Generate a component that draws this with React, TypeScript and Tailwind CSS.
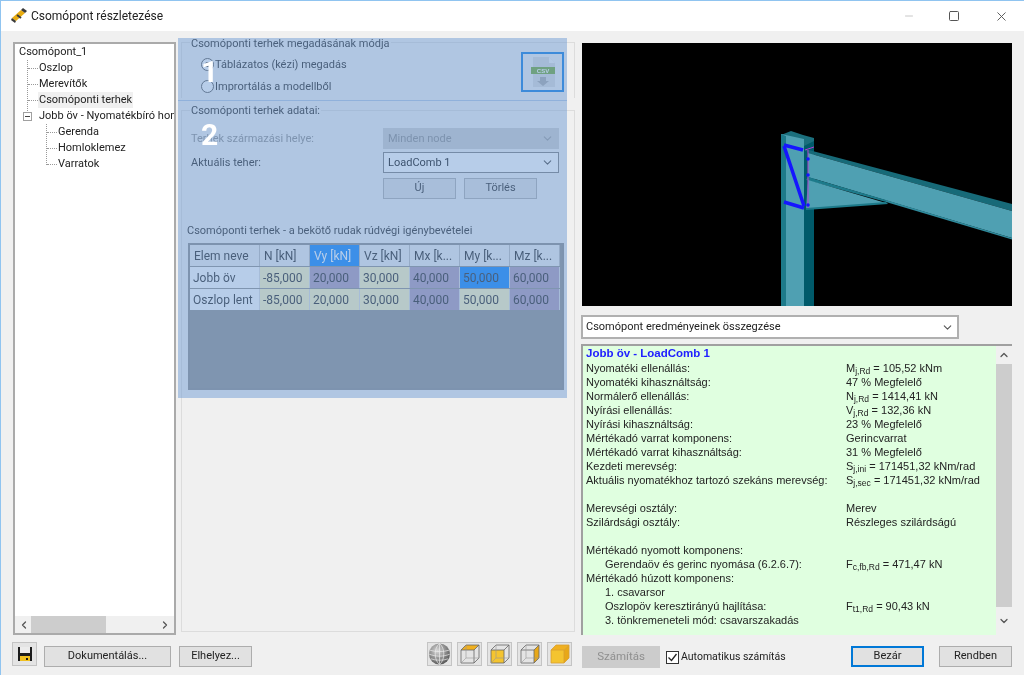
import { ChevronDown, ChevronLeft, ChevronRight, ChevronUp, Minus, Square, X } from "lucide-react";
import type { ReactNode } from "react";

const uiFont = "[font-family:'Roboto','Noto_Sans',sans-serif]";

function TitleIcon() {
  return (
    <svg width="18" height="18" viewBox="0 0 18 18">
      <path d="M2 11 L11 3 L15 6 L6 14 Z" fill="#e8ac10" />
      <path d="M2 11 L6 14 L5 16 L1 13 Z" fill="#3a3a3a" />
      <path d="M11 3 L13 1 L17 4 L15 6 Z" fill="#3a3a3a" />
      <path d="M7 8 L11 11" stroke="#3a3a3a" strokeWidth="2" />
    </svg>
  );
}

function TreeRow({ label, active }: { label: string; active?: boolean }) {
  return (
    <div className="flex h-4 items-center">
      <span className="w-[10px] shrink-0 border-t border-dotted border-[#999]" />
      <span className={`whitespace-nowrap px-[1px] ${active ? "bg-[#f0f0f0]" : ""}`}>{label}</span>
    </div>
  );
}

function Tree() {
  return (
    <div className="flex h-[593px] w-[163px] shrink-0 flex-col border-2 border-[#aaaaaa] bg-white text-[11px] leading-4 text-[#222]">
      <div className="flex-1 overflow-hidden pl-[4px]">
        <div className="h-4 whitespace-nowrap">Csomópont_1</div>
        <div className="-mb-[5px] ml-[8px] h-[53px] border-l border-dotted border-[#999]">
          <TreeRow label="Oszlop" />
          <TreeRow label="Merevítők" />
          <TreeRow label="Csomóponti terhek" active />
        </div>
        <div className="flex h-4 items-center whitespace-nowrap pl-[4px]">
          <span className="flex h-[9px] w-[9px] shrink-0 items-center justify-center border border-[#a0a0a0] bg-white">
            <span className="h-px w-[5px] bg-[#444]" />
          </span>
          <span className="ml-[7px]">Jobb öv - Nyomatékbíró hom</span>
        </div>
        <div className="ml-[27px] h-[41px] border-l border-dotted border-[#999]">
          <TreeRow label="Gerenda" />
          <TreeRow label="Homloklemez" />
          <TreeRow label="Varratok" />
        </div>
      </div>
      <div className="flex h-[17px] items-center bg-[#f0f0f0] text-[#555]">
        <ChevronLeft size={12} strokeWidth={2.5} className="ml-[3px]" />
        <div className="ml-[1px] h-full w-[75px] bg-[#cdcdcd]" />
        <ChevronRight size={12} strokeWidth={2.5} className="ml-auto mr-[3px]" />
      </div>
    </div>
  );
}

function Radio({ checked, label }: { checked?: boolean; label: string }) {
  return (
    <div className="flex h-[22px] items-center">
      <span className="flex h-[13px] w-[13px] items-center justify-center rounded-full border border-[#555] bg-white">
        {checked && <span className="h-[5px] w-[5px] rounded-full bg-[#222]" />}
      </span>
      <span className="ml-[1px] pt-[3px]">{label}</span>
    </div>
  );
}

function CsvIcon() {
  return (
    <svg width="34" height="34" viewBox="0 0 34 34">
      <path d="M7 2 H23 L29 8 V32 H7 Z" fill="#dadada" />
      <path d="M23 2 L29 8 H23 Z" fill="#f4f4f4" />
      <rect x="5" y="12" width="24" height="7" fill="#6fa62e" />
      <text x="17" y="18" textAnchor="middle" fontSize="6" fontWeight="700" fill="#fff" fontFamily="Liberation Sans, sans-serif">CSV</text>
      <path d="M14 22 H20 V26 H23 L17 31 L11 26 H14 Z" fill="#a8a8a8" />
    </svg>
  );
}

function Select({ value, disabled }: { value: string; disabled?: boolean }) {
  return (
    <div
      className={`flex h-[21px] w-[176px] items-center border px-[4px] ${
        disabled ? "border-[#cccccc] bg-[#cccccc] text-[#8a8a8a]" : "border-[#7a7a7a] bg-white text-black"
      }`}
    >
      <span className="pt-[2px]">{value}</span>
      <ChevronDown size={13} className={`ml-auto ${disabled ? "text-[#999]" : "text-[#444]"}`} />
    </div>
  );
}

function Btn({ children, className }: { children: ReactNode; className: string }) {
  return (
    <div className={`flex items-center justify-center border border-[#adadad] bg-[#e1e1e1] text-[11px] text-[#222] ${className}`}>
      {children}
    </div>
  );
}

const cols = ["N [kN]", "Vy [kN]", "Vz [kN]", "Mx [k...", "My [k...", "Mz [k..."];
const rows = [
  { name: "Jobb öv", values: ["-85,000", "20,000", "30,000", "40,000", "50,000", "60,000"], tone: ["c", "p", "c", "p", "s", "p"] },
  { name: "Oszlop lent", values: ["-85,000", "20,000", "30,000", "40,000", "50,000", "60,000"], tone: ["c", "c", "c", "p", "c", "p"] },
];

function LoadTable() {
  return (
    <div className="h-[147px] w-[376px] border-2 border-[#8a8a8a] bg-[#8e8e8c] text-[12px]">
      <div className="grid grid-cols-[70px_50px_50px_50px_50px_50px_50px] gap-y-px">
        <div className="flex h-[21px] items-center border-r border-[#bbb] bg-[#eeeeee] pl-[4px] pt-[2px]">Elem neve</div>
        {cols.map((c) => (
          <div
            key={c}
            className={`flex h-[21px] items-center whitespace-nowrap border-r border-[#bbb] pl-[4px] pt-[2px] ${
              c === "Vy [kN]" ? "bg-[#0882fc] text-white" : "bg-[#eeeeee]"
            }`}
          >
            {c}
          </div>
        ))}
        {rows.map((r) => (
          <div key={r.name} className="contents">
            <div className="flex h-[21px] items-center border-r border-[#ddd] bg-white pl-[3px] pt-[2px]">{r.name}</div>
            {r.values.map((v, i) => (
              <div
                key={i}
                className={`flex h-[21px] items-center border-r border-[#ddd] pl-[3px] pt-[2px] ${
                  r.tone[i] === "c" ? "bg-[#fff6be]" : r.tone[i] === "p" ? "bg-[#ac98b6]" : "bg-[#0882fc]"
                }`}
              >
                {v}
              </div>
            ))}
          </div>
        ))}
      </div>
    </div>
  );
}

function Middle() {
  return (
    <div className="ml-[5px] flex h-[590px] w-[394px] shrink-0 flex-col text-[11px] text-[#222]">
      <div className="relative h-[56px] border border-b-0 border-[#dcdcdc] pl-[19px] pt-[10px]">
        <span className="absolute -top-[7px] left-[8px] bg-[#f0f0f0] px-[1px]">Csomóponti terhek megadásának módja</span>
        <Radio checked label="Táblázatos (kézi) megadás" />
        <Radio label="Imprortálás a modellből" />
        <div className="absolute left-[339px] top-[9px] flex h-[40px] w-[43px] items-center justify-center border-2 border-[#0a7be0]">
          <CsvIcon />
        </div>
      </div>
      <div className="relative mt-[12px] flex-1 border border-[#dcdcdc] pt-[15px]">
        <span className="absolute -top-[8px] left-[8px] bg-[#f0f0f0] px-[1px]">Csomóponti terhek adatai:</span>
        <div className="flex h-[24px] items-center pl-[9px]">
          <span className="w-[192px] pt-[2px] text-[#8a8a8a]">Terhek származási helye:</span>
          <Select value="Minden node" disabled />
        </div>
        <div className="flex h-[24px] items-center pl-[9px]">
          <span className="w-[192px] pt-[2px]">Aktuális teher:</span>
          <Select value="LoadComb 1" />
        </div>
        <div className="ml-[201px] mt-[4px] flex gap-[8px]">
          <Btn className="h-[21px] w-[73px]">Új</Btn>
          <Btn className="h-[21px] w-[73px]">Törlés</Btn>
        </div>
        <div className="mt-[24px] pl-[5px]">Csomóponti terhek - a bekötő rudak rúdvégi igénybevételei</div>
        <div className="mt-[3px] pl-[6px]">
          <LoadTable />
        </div>
      </div>
    </div>
  );
}

function Scene() {
  return (
    <svg width="430" height="263" viewBox="582 43 430 263" className="block bg-black">
      <path d="M781 135 L791 131 L803 135 L814 138 V148 L805 150 Z" fill="#1b6f7d" />
      <path d="M781 134 L804 139 V306 H781 Z" fill="#4fa0b2" />
      <path d="M781 134 L786 136 V306 H781 Z" fill="#1d7a8a" />
      <path d="M804 146 L814 141 V306 H804 Z" fill="#005a6a" />
      <path d="M805 149 L1012 204 V211 L808 153 Z" fill="#176a78" />
      <path d="M808 153 L1012 211 V238 L808 177 Z" fill="#4fa0b2" />
      <path d="M808 177 L886 200 L886 202 L806 180 Z" fill="#1d7a8a" />
      <path d="M886 200 L1012 238 V239.5 L886 202 Z" fill="#2f8a9c" />
      <path d="M808 180 L886 203 L806 209 Z" fill="#4fa0b2" />
      <path d="M806 208 L886 202 L888 204 L806 210 Z" fill="#1d7a8a" />
      <path d="M784 145 L803 150 M784 146 L804 206 M784 202 L804 208" stroke="#1515ff" strokeWidth="3.5" fill="none" />
      <path d="M808 150 V208 M805 150 L814 147" stroke="#b040d0" strokeWidth="1" fill="none" />
      <circle cx="808" cy="159" r="1.8" fill="#1515ff" />
      <circle cx="808" cy="175" r="1.8" fill="#1515ff" />
      <circle cx="808" cy="205" r="1.8" fill="#1515ff" />
    </svg>
  );
}

type ResultLine = { left?: string; right?: ReactNode; indent?: boolean };

const S = ({ base, sub, rest }: { base: string; sub: string; rest: string }) => (
  <>
    {base}
    <sub className="text-[8.5px] leading-none">{sub}</sub> {rest}
  </>
);

const results: ResultLine[] = [
  { left: "Nyomatéki ellenállás:", right: <S base="M" sub="j,Rd" rest="= 105,52 kNm" /> },
  { left: "Nyomatéki kihasználtság:", right: "47 % Megfelelő" },
  { left: "Normálerő ellenállás:", right: <S base="N" sub="j,Rd" rest="= 1414,41 kN" /> },
  { left: "Nyírási ellenállás:", right: <S base="V" sub="j,Rd" rest="= 132,36 kN" /> },
  { left: "Nyírási kihasználtság:", right: "23 % Megfelelő" },
  { left: "Mértékadó varrat komponens:", right: "Gerincvarrat" },
  { left: "Mértékadó varrat kihasználtság:", right: "31 % Megfelelő" },
  { left: "Kezdeti merevség:", right: <S base="S" sub="j,ini" rest="= 171451,32 kNm/rad" /> },
  { left: "Aktuális nyomatékhoz tartozó szekáns merevség:", right: <S base="S" sub="j,sec" rest="= 171451,32 kNm/rad" /> },
  {},
  { left: "Merevségi osztály:", right: "Merev" },
  { left: "Szilárdsági osztály:", right: "Részleges szilárdságú" },
  {},
  { left: "Mértékadó nyomott komponens:" },
  { left: "Gerendaöv és gerinc nyomása (6.2.6.7):", right: <S base="F" sub="c,fb,Rd" rest="= 471,47 kN" />, indent: true },
  { left: "Mértékadó húzott komponens:" },
  { left: "1. csavarsor", indent: true },
  { left: "Oszlopöv keresztirányú hajlítása:", right: <S base="F" sub="t1,Rd" rest="= 90,43 kN" />, indent: true },
  { left: "3. tönkremeneteli mód: csavarszakadás", indent: true },
];

function Results() {
  return (
    <div className="mt-[5px] flex h-[291px] border-l-2 border-t-2 border-[#a0a0a0] bg-[#e0ffe0] font-['Liberation_Sans',Arial,sans-serif] text-[11px] text-[#222]">
      <div className="flex-1 overflow-hidden pl-[3px]">
        <div className="h-[15px] text-[11.5px] font-bold leading-[15px] text-[#2020ff]">Jobb öv - LoadComb 1</div>
        {results.map((line, i) => (
          <div key={i} className="flex h-[14px] items-center whitespace-nowrap leading-[14px]">
            <span className={`w-[260px] ${line.indent ? "pl-[19px]" : ""}`}>{line.left}</span>
            <span>{line.right}</span>
          </div>
        ))}
      </div>
      <div className="flex w-[16px] flex-col items-center bg-[#f0f0f0] text-[#555]">
        <ChevronUp size={12} strokeWidth={2.5} className="my-[3px]" />
        <div className="w-full flex-1 bg-[#cdcdcd]" />
        <ChevronDown size={12} strokeWidth={2.5} className="my-[8px]" />
      </div>
    </div>
  );
}

function Right() {
  return (
    <div className="ml-[6px] flex w-[431px] shrink-0 flex-col">
      <div className="ml-[1px] mt-[1px]">
        <Scene />
      </div>
      <div className={`${uiFont} mt-[9px] flex h-[24px] w-[378px] items-center border-2 border-[#b0b0b0] bg-white px-[3px] text-[11px] text-[#222]`}>
        <span>Csomópont eredményeinek összegzése</span>
        <ChevronDown size={13} className="ml-auto text-[#555]" />
      </div>
      <Results />
    </div>
  );
}

function SaveIcon() {
  return (
    <svg width="16" height="16" viewBox="0 0 16 16">
      <path d="M1 1 H15 V15 H1 Z" fill="#1c1c1c" />
      <rect x="3" y="1" width="10" height="6" fill="#ececec" />
      <rect x="3" y="10" width="10" height="5" fill="#f0c020" />
      <rect x="9" y="12" width="2" height="2" fill="#1c1c1c" />
    </svg>
  );
}

function SphereIcon() {
  return (
    <svg width="24" height="24" viewBox="0 0 24 24">
      <defs>
        <radialGradient id="sph" cx="0.4" cy="0.35" r="0.75">
          <stop offset="0" stopColor="#d8d8d8" />
          <stop offset="1" stopColor="#4a4a4a" />
        </radialGradient>
      </defs>
      <circle cx="12" cy="12" r="11" fill="url(#sph)" />
      <path
        d="M12 1 C6 6 6 18 12 23 M12 1 C18 6 18 18 12 23 M12 1 V23 M2 8 C8 10 16 10 22 8 M1 12 C8 15 16 15 23 12 M3 17 C8 19 16 19 21 17"
        stroke="#eeeeee"
        strokeWidth="0.7"
        fill="none"
      />
    </svg>
  );
}

function CubeIcon({ face }: { face: "top" | "front" | "side" | "all" }) {
  const yellow = "#f4c430";
  return (
    <svg width="20" height="20" viewBox="0 0 20 20">
      {(face === "top" || face === "all") && <path d="M1 6 L6 1 H19 L14 6 Z" fill="#f0b020" />}
      {(face === "front" || face === "all") && <rect x="1" y="6" width="13" height="13" fill={yellow} />}
      {(face === "side" || face === "all") && <path d="M14 6 L19 1 V14 L14 19 Z" fill="#e8a818" />}
      <path d="M1 6 H14 V19 H1 Z M1 6 L6 1 H19 V14 L14 19 M14 6 L19 1" stroke={face === "all" ? "#d8a030" : "#666"} strokeWidth="0.8" fill="none" />
      {face !== "all" && <path d="M6 1 V14 H19 M6 14 L1 19" stroke="#999" strokeWidth="0.6" fill="none" />}
    </svg>
  );
}

function Footer() {
  const iconBox = "flex h-[24px] w-[25px] items-center justify-center border border-[#c4c4c4] bg-[#e4e4e4]";
  return (
    <div className="flex flex-1 items-start pl-[11px] pt-[7px] text-[11.5px] text-[#222]">
      <div className={iconBox}>
        <SaveIcon />
      </div>
      <Btn className="ml-[7px] mt-[4px] h-[21px] w-[127px]">Dokumentálás...</Btn>
      <Btn className="ml-[8px] mt-[4px] h-[21px] w-[73px]">Elhelyez...</Btn>
      <div className="ml-[175px] flex gap-[5px]">
        <div className={iconBox}><SphereIcon /></div>
        <div className={iconBox}><CubeIcon face="top" /></div>
        <div className={iconBox}><CubeIcon face="front" /></div>
        <div className={iconBox}><CubeIcon face="side" /></div>
        <div className={iconBox}><CubeIcon face="all" /></div>
      </div>
      <div className="ml-[10px] mt-[4px] flex h-[22px] w-[78px] items-center justify-center bg-[#cccccc] text-[#8f8f8f]">Számítás</div>
      <div className="ml-[6px] mt-[5px] flex h-[20px] items-center">
        <span className="flex h-[13px] w-[13px] items-center justify-center border border-[#333] bg-white">
          <svg width="11" height="11" viewBox="0 0 11 11">
            <path d="M1.5 5.5 L4.5 8.5 L9.5 2" stroke="#222" strokeWidth="1.3" fill="none" />
          </svg>
        </span>
        <span className="ml-[2px] text-[10.5px]">Automatikus számítás</span>
      </div>
      <div className="ml-auto mr-[12px] mt-[4px] flex gap-[15px]">
        <Btn className="h-[21px] w-[73px] border-2 !border-[#0078d7]">Bezár</Btn>
        <Btn className="h-[21px] w-[73px]">Rendben</Btn>
      </div>
    </div>
  );
}

export default function App() {
  return (
    <div className={`${uiFont} relative flex h-[675px] w-[1024px] flex-col overflow-hidden border-l border-t border-[#90c4f0] bg-[#f0f0f0] blur-[0.5px]`}>
      <div className="flex h-[30px] shrink-0 items-center bg-white pl-[9px] text-[12px] text-[#222]">
        <TitleIcon />
        <span className="ml-[3px]">Csomópont részletezése</span>
        <div className="ml-auto flex items-center text-[#555]">
          <Minus size={12} className="mr-[33px] text-[#c8c8c8]" />
          <Square size={12} strokeWidth={2} className="mr-[34px]" />
          <X size={15} strokeWidth={1.5} className="mr-[15px]" />
        </div>
      </div>
      <div className="flex shrink-0 pl-[12px] pt-[11px]">
        <Tree />
        <Middle />
        <Right />
      </div>
      <Footer />

      {/* kék kiemelés a bal oldali csoportok fölött */}
      <div className="pointer-events-none absolute left-[177px] top-[37px] h-[63px] w-[389px] bg-[#709cd4]/50" />
      <div className="pointer-events-none absolute left-[177px] top-[99px] h-[298px] w-[389px] bg-[#709cd4]/50" />
      <span className="pointer-events-none absolute left-[200px] top-[53px] text-[30px] font-bold leading-9 text-white">1</span>
      <span className="pointer-events-none absolute left-[200px] top-[116px] text-[30px] font-bold leading-9 text-white">2</span>
    </div>
  );
}
